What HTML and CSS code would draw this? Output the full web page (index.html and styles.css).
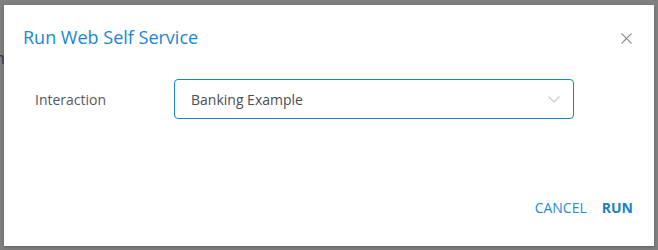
FILE: index.html
```html
<!DOCTYPE html>
<html>
<head>
<meta charset="utf-8">
<link rel="stylesheet" href="styles.css">
</head>
<body>
<div class="backdrop">
  <span class="bg-text">n</span>
  <div class="dialog">
    <div class="dialog-header">
      <h1 class="dialog-title">Run Web Self Service</h1>
      <button class="close-btn" aria-label="Close">
        <svg width="11" height="11" viewBox="0 0 11 11"><path d="M0.5 0.5L10.5 10.5M10.5 0.5L0.5 10.5" stroke="#8a8f99" stroke-width="1.1" fill="none"/></svg>
      </button>
    </div>
    <div class="dialog-body">
      <div class="field-row">
        <label class="field-label">Interaction</label>
        <div class="select">
          <span class="select-value">Banking Example</span>
          <svg class="chevron" width="12" height="7" viewBox="0 0 12 7"><path d="M0.5 0.5L6 6L11.5 0.5" stroke="#c4c8ce" stroke-width="1.1" fill="none"/></svg>
        </div>
      </div>
    </div>
    <div class="dialog-footer">
      <button class="btn">CANCEL</button>
      <button class="btn btn-primary">RUN</button>
    </div>
  </div>
</div>
</body>
</html>
```
FILE: styles.css
```css
* { box-sizing: border-box; }
html, body { margin: 0; padding: 0; }
body {
  width: 658px;
  height: 250px;
  background: #7f7f7f;
  font-family: "Open Sans", "Noto Sans", sans-serif;
  overflow: hidden;
}
.backdrop {
  position: relative;
  width: 658px;
  height: 250px;
  padding: 5px 4px 4px 4px;
}
.bg-text {
  position: absolute;
  left: -5px;
  top: 47px;
  font-size: 16px;
  color: #2a3a55;
}
.dialog {
  position: relative;
  width: 650px;
  height: 241px;
  background: #fff;
  display: flex;
  flex-direction: column;
  box-shadow: 0 1px 3px rgba(0,0,0,0.25);
}
.dialog-header {
  display: flex;
  align-items: center;
  justify-content: space-between;
  padding: 19px 22px 0 19px;
  height: 45px;
}
.dialog-title {
  margin: 0;
  font-size: 18px;
  font-weight: 400;
  color: #1987d3;
  line-height: 24px;
}
.close-btn {
  background: none;
  border: 0;
  padding: 0;
  width: 11px;
  height: 11px;
  display: flex;
  margin-top: 3px;
}
.dialog-body {
  padding: 29px 80px 0 31px;
}
.field-row {
  display: flex;
  align-items: center;
}
.field-label {
  width: 139px;
  font-size: 14px;
  color: #555a60;
}
.select {
  width: 400px;
  height: 40px;
  border: 1px solid #1683cb;
  border-radius: 4px;
  display: flex;
  align-items: center;
  justify-content: space-between;
  padding: 0 13px 0 16px;
}
.select-value {
  font-size: 14px;
  color: #4a4e55;
}
.chevron { margin-top: 1px; }
.dialog-footer {
  margin-top: auto;
  display: flex;
  justify-content: flex-end;
  gap: 15px;
  padding: 0 21px 28px 0;
}
.btn {
  background: none;
  border: 0;
  padding: 0;
  font-family: inherit;
  font-size: 14px;
  color: #1f8ad6;
  line-height: 20px;
}
.btn-primary {
  font-weight: 700;
  color: #1a80c8;
}
```
